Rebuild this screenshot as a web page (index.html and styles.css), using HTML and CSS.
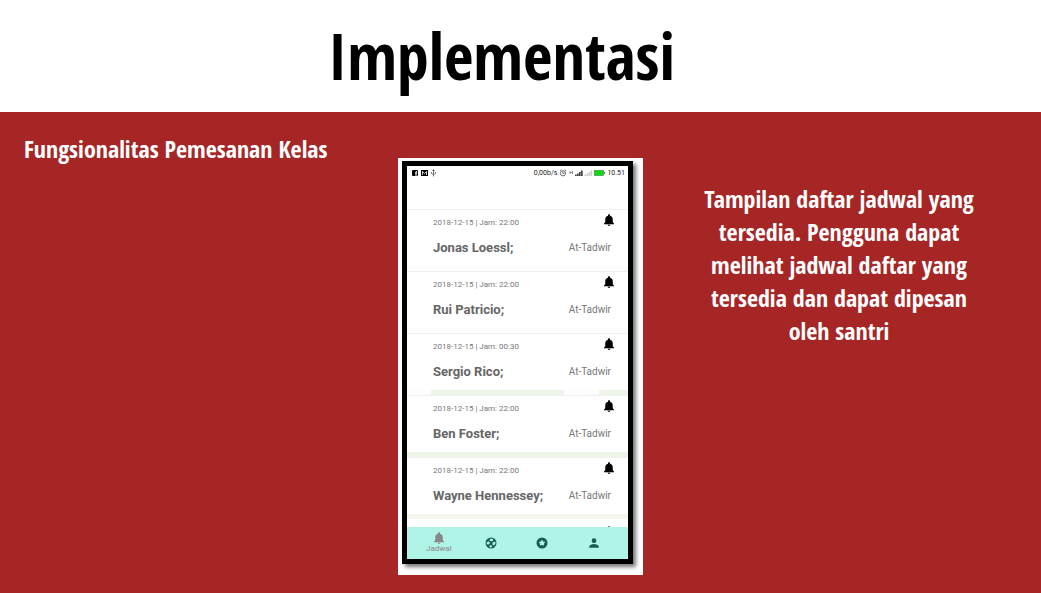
FILE: index.html
```html
<!DOCTYPE html>
<html lang="id">
<head>
<meta charset="utf-8">
<title>Implementasi</title>
<link rel="stylesheet" href="styles.css">
</head>
<body>
<svg class="defs" aria-hidden="true">
  <symbol id="bell" viewBox="0 0 24 24"><path fill="currentColor" d="M12 24c1.600 0 2.600-1 2.600-2.400H9.400C9.400 23 10.400 24 12 24zm7.500-7.500V11c0-3.800-2-6.500-5.500-7.300V2.500C14 1.300 13.200.5 12 .5s-2 .8-2 2v1.200C6.500 4.500 4.500 7.200 4.500 11v5.500L2 18.800v1.500h20v-1.500z"/></symbol>
</svg>
<header class="header"><h1 class="title">Implementasi</h1></header>
<main class="content">
  <h2 class="subtitle">Fungsionalitas Pemesanan Kelas</h2>
  <figure class="shot">
    <div class="phone">
      <div class="status">
        <svg class="status-left" viewBox="0 0 26 8" aria-hidden="true">
          <rect x="0" y="1" width="6" height="6" rx="1"/><path d="M4 7V4h1.200M4 4V2.700h1.200M3 4h1" fill="none" stroke="#fff"/>
          <rect x="9" y="1" width="7" height="6"/><path d="M10.500 6V2.500l2 2 2-2V6" fill="none" stroke="#fff" stroke-width=".8"/>
          <path d="M21.500 7.500V1M20.500 2l1-1.500 1 1.500M19.500 3v1.500l2 1.200 2-1.200V3" fill="none" stroke="#555" stroke-width=".8"/>
        </svg>
        <span class="speed">0,00b/s</span>
        <svg class="status-right" viewBox="0 0 46 8" aria-hidden="true">
          <g fill="none" stroke="#444" stroke-width=".8"><circle cx="4" cy="4.300" r="2.600"/><path d="M4 2.500v2h1.300M1 1.700 2.300.7M7 1.700 5.700.7"/></g>
          <path d="M11 2v3M13.500 2v3M11 3.500h2.500" stroke="#666" stroke-width=".7"/>
          <path d="M16 7V5.500h1.700V7zM18 7V4.500h1.700V7zM20 7V3h1.700v4zM22 7V1.500h1.700V7z" fill="#444"/>
          <path d="M25.500 7V5.500h1.500V7zM27.500 7V4.500H29V7zM29.500 7V3H31v4zM31.500 7V1.500H33V7z" fill="#ccc"/>
          <rect x="35.500" y="1.500" width="9" height="5" fill="#0fdc0f" stroke="#4b8b4b" stroke-width=".7"/><path d="M45 3h1v2h-1z" fill="#4b8b4b"/>
        </svg>
        <span>10.51</span>
      </div>
      <ul class="list">
        <li class="card"><span class="date">2018-12-15 | Jam: 22:00</span><svg class="bell"><use href="#bell"/></svg><strong class="name">Jonas Loessl;</strong><span class="type">At-Tadwir</span></li>
        <li class="card"><span class="date">2018-12-15 | Jam: 22:00</span><svg class="bell"><use href="#bell"/></svg><strong class="name">Rui Patricio;</strong><span class="type">At-Tadwir</span></li>
        <li class="card card-part"><span class="date">2018-12-15 | Jam: 00:30</span><svg class="bell"><use href="#bell"/></svg><strong class="name">Sergio Rico;</strong><span class="type">At-Tadwir</span></li>
        <li class="card card-green"><span class="date">2018-12-15 | Jam: 22:00</span><svg class="bell"><use href="#bell"/></svg><strong class="name">Ben Foster;</strong><span class="type">At-Tadwir</span></li>
        <li class="card card-cream"><span class="date">2018-12-15 | Jam: 22:00</span><svg class="bell"><use href="#bell"/></svg><strong class="name">Wayne Hennessey;</strong><span class="type">At-Tadwir</span></li>
        <li class="card-next"><svg class="bell bell-next"><use href="#bell"/></svg></li>
      </ul>
      <nav class="tabs">
        <a class="tab tab-on" href="#jadwal"><svg class="icon"><use href="#bell"/></svg>Jadwal</a>
        <a class="tab" href="#dunia" aria-label="Dunia"><svg class="icon" viewBox="0 0 24 24"><circle cx="12" cy="12" r="11" fill="#155e52"/><path fill="#b0f3e7" d="M9.500 3.500h5.500l1.500 3-3 2.500-4-1.500zM3 11l4-2.500 3 3-2 3.500-4.500-.5zM15 11l5.500-2 .5 4-3 4-3-1.500zM9 17.500l3.500-1.500 2 3-2 2-3.500-.5z"/></svg></a>
        <a class="tab" href="#favorit" aria-label="Favorit"><svg class="icon" viewBox="0 0 24 24"><circle cx="12" cy="12" r="11" fill="#155e52"/><path fill="#b0f3e7" d="m12 5.500 2.500 3.300 4 1-2.400 3.400V17L12 16l-4.100 1v-3.800L5.500 9.800l4-1z"/></svg></a>
        <a class="tab" href="#profil" aria-label="Profil"><svg class="icon" viewBox="0 0 24 24"><path fill="#155e52" d="M12 12a4.700 4.700 0 1 0 0-9.400 4.700 4.700 0 0 0 0 9.400zm0 2c-4 0-9.500 1.800-9.500 5v2.500h19V19c0-3.200-5.500-5-9.500-5z"/></svg></a>
      </nav>
    </div>
  </figure>
  <p class="desc">Tampilan daftar jadwal yang tersedia. Pengguna dapat melihat jadwal daftar yang tersedia dan dapat dipesan oleh santri</p>
</main>
</body>
</html>
```
FILE: styles.css
```css
* { box-sizing: border-box; margin: 0; padding: 0; }
body {
  min-height: 100vh;
  display: flex;
  flex-direction: column;
  background: #fff;
  font-family: "Open Sans Condensed", "Noto Sans Condensed", "Open Sans", "Noto Sans", sans-serif;
  font-weight: 700;
}
.defs { display: none; }
.header { padding: 12px 38px 12px 0; text-align: center; }
.title { font-size: 64px; line-height: 88px; color: #000; }
.content {
  flex: 1;
  display: grid;
  grid-template-columns: 1fr 245px 1fr;
  align-items: start;
  background: #a62626;
  color: #fff;
}
.subtitle { padding: 20px 0 0 24px; font-size: 24px; line-height: 33px; white-space: nowrap; }
.desc { padding: 70px 56px 0 50px; font-size: 24px; line-height: 33px; text-align: center; }
.shot { margin: 46px 0 18px; padding: 3px 10px 11px 4px; background: #fff; }
.phone {
  border: 5px solid #000;
  background: #fff;
  box-shadow: 3px 3px 4px #777;
  font-family: Roboto, sans-serif;
  font-weight: 400;
  color: #777;
}
.status {
  display: flex;
  align-items: center;
  height: 43px;
  padding: 0 3px 29px 5px;
  font-size: 7px;
  line-height: 14px;
  color: #222;
}
.status-left { width: 26px; height: 8px; margin-right: auto; }
.status-right { width: 46px; height: 8px; margin: 0 2px; }
.list { list-style: none; }
.card {
  display: grid;
  grid-template-columns: 1fr auto;
  grid-template-rows: 24px 26px;
  align-items: center;
  height: 62px;
  padding: 0 17px 5px 26px;
  border-top: 1px solid #f0f0f0;
  background: linear-gradient(#fdfdfd, #fdfdfd) bottom / 100% 5px no-repeat;
}
.card-part { background-image: linear-gradient(90deg, #fdfdfd 11%, #edf5e9 11% 71%, #fdfdfd 71% 87%, #edf5e9 87%); }
.card-green { background-image: linear-gradient(#edf5e9, #edf5e9); }
.card-cream { background-image: linear-gradient(#f5f7ec, #f5f7ec); }
.card-next { display: flex; justify-content: end; height: 8px; padding: 7px 17px 0 0; overflow: hidden; }
.date { font-size: 8px; }
.bell { flex: none; width: 12px; height: 12px; align-self: start; justify-self: end; margin: 4px -4px 0 0; color: #000; }
.bell-next { margin-top: 0; }
.name { font-size: 13px; font-weight: 700; color: #666; white-space: nowrap; }
.type { font-size: 10px; }
.tabs {
  display: grid;
  grid-template-columns: repeat(4, 1fr);
  height: 32px;
  padding: 0 8px 0 6px;
  background: #b0f3e7;
}
.tab {
  display: flex;
  flex-direction: column;
  align-items: center;
  justify-content: center;
  font-size: 8px;
  line-height: 10px;
  color: #155e52;
  text-decoration: none;
}
.tab-on { color: #888; }
.icon { width: 12px; height: 12px; }
```
